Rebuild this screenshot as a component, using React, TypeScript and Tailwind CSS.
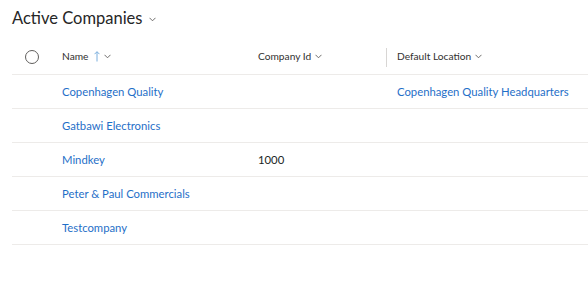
import React from "react";

const Chevron = ({ className = "" }: { className?: string }) => (
  <svg className={className} width="7" height="5" viewBox="0 0 7 5" fill="none">
    <path d="M0.5 0.8 L3.5 3.8 L6.5 0.8" stroke="#605e5c" strokeWidth="0.9" />
  </svg>
);

const rows = [
  { name: "Copenhagen Quality", id: "", loc: "Copenhagen Quality Headquarters" },
  { name: "Gatbawi Electronics", id: "", loc: "" },
  { name: "Mindkey", id: "1000", loc: "" },
  { name: "Peter & Paul Commercials", id: "", loc: "" },
  { name: "Testcompany", id: "", loc: "" },
];

export default function App() {
  return (
    <div
      className="w-[588px] h-[293px] bg-white overflow-hidden pl-[12px]"
      style={{ fontFamily: 'Lato, "Open Sans", sans-serif' }}
    >
      <div className="flex items-center h-[36px] pt-[1px]">
        <span className="text-[16.5px] text-[#262626]">Active Companies</span>
        <Chevron className="ml-[7px] mt-[2px]" />
      </div>
      <div className="flex items-center h-[39px] pt-[4px] border-b border-[#edebe9] text-[10.2px] text-[#323130]">
        <div className="w-[50px] flex items-center pl-[13px]">
          <div className="w-[14px] h-[14px] rounded-full border border-[#605e5c]" />
        </div>
        <div className="w-[196px] flex items-center">
          <span>Name</span>
          <svg className="ml-[6px]" width="6" height="11" viewBox="0 0 6 11" fill="none">
            <path d="M3 10.5 V0.8 M0.5 3.2 L3 0.7 L5.5 3.2" stroke="#7aaedd" strokeWidth="1" />
          </svg>
          <Chevron className="ml-[4px]" />
        </div>
        <div className="w-[128px] flex items-center">
          <span>Company Id</span>
          <Chevron className="ml-[4px]" />
        </div>
        <div className="w-[11px] h-[19px] border-l border-[#d8d6d4]" />
        <div className="flex items-center">
          <span>Default Location</span>
          <Chevron className="ml-[4px]" />
        </div>
      </div>
      {rows.map((r) => (
        <div
          key={r.name}
          className="flex items-center h-[34px] pt-[1px] border-b border-[#edebe9] text-[11.3px]"
        >
          <div className="w-[50px]" />
          <div className="w-[196px] text-[#1f6fc8] whitespace-nowrap">{r.name}</div>
          <div className="w-[139px] text-[#201f1e]">{r.id}</div>
          <div className="text-[#1f6fc8] whitespace-nowrap">{r.loc}</div>
        </div>
      ))}
    </div>
  );
}
